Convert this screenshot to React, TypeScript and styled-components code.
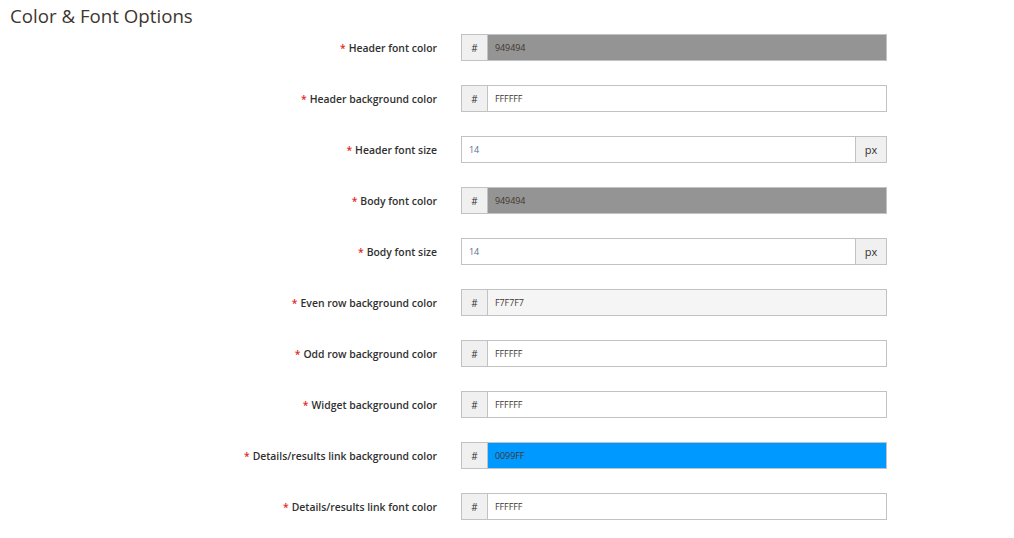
import React from "react";
import styled, { createGlobalStyle } from "styled-components";

const Global = createGlobalStyle`
  html, body { margin: 0; padding: 0; background: #fff; }
  body { font-family: "Open Sans", "Liberation Sans", sans-serif; }
`;

const Page = styled.div`
  padding: 0 10px;
`;

const Title = styled.h2`
  margin: 0;
  padding-top: 3px;
  height: 31px;
  font-size: 18.7px;
  font-weight: 400;
  line-height: 26px;
  color: #41362f;
`;

const Form = styled.div`
  display: flex;
  flex-direction: column;
  gap: 24px;
`;

const Row = styled.div`
  display: grid;
  grid-template-columns: 427px 426px;
  column-gap: 24px;
  align-items: center;
  height: 27px;
`;

const Label = styled.label`
  text-align: right;
  font-size: 10.4px;
  font-weight: 600;
  color: #303030;
`;

const Star = styled.span`
  color: #e22626;
  margin-right: 3px;
`;

const Group = styled.div`
  display: flex;
  height: 27px;
  box-sizing: border-box;
  border: 1px solid #c2c2c2;
`;

const Addon = styled.span<{ $side?: "left" | "right" }>`
  display: flex;
  align-items: center;
  justify-content: center;
  width: ${(p) => (p.$side === "right" ? "30px" : "25px")};
  background: #f0f0f0;
  ${(p) =>
    p.$side === "right"
      ? "border-left: 1px solid #c2c2c2;"
      : "border-right: 1px solid #c2c2c2;"}
  font-size: ${(p) => (p.$side === "right" ? "11px" : "10px")};
  color: #303030;
  flex-shrink: 0;
`;

const Field = styled.span<{ $bg: string; $color: string }>`
  flex: 1;
  display: flex;
  align-items: center;
  padding-left: 7px;
  background: ${(p) => p.$bg};
  color: ${(p) => p.$color};
  font-size: 9px;
  letter-spacing: -0.1px;
`;

type Item = {
  label: string;
  value: string;
  kind: "color" | "size";
  bg?: string;
};

const items: Item[] = [
  { label: "Header font color", value: "949494", kind: "color", bg: "#949494" },
  { label: "Header background color", value: "FFFFFF", kind: "color", bg: "#ffffff" },
  { label: "Header font size", value: "14", kind: "size" },
  { label: "Body font color", value: "949494", kind: "color", bg: "#949494" },
  { label: "Body font size", value: "14", kind: "size" },
  { label: "Even row background color", value: "F7F7F7", kind: "color", bg: "#f5f5f5" },
  { label: "Odd row background color", value: "FFFFFF", kind: "color", bg: "#ffffff" },
  { label: "Widget background color", value: "FFFFFF", kind: "color", bg: "#ffffff" },
  { label: "Details/results link background color", value: "0099FF", kind: "color", bg: "#0099ff" },
  { label: "Details/results link font color", value: "FFFFFF", kind: "color", bg: "#ffffff" },
];

export default function App() {
  return (
    <Page>
      <Global />
      <Title>Color &amp; Font Options</Title>
      <Form>
        {items.map((it) => (
          <Row key={it.label}>
            <Label>
              <Star>*</Star>
              {it.label}
            </Label>
            {it.kind === "color" ? (
              <Group>
                <Addon>#</Addon>
                <Field $bg={it.bg!} $color="#41362f">
                  {it.value}
                </Field>
              </Group>
            ) : (
              <Group>
                <Field $bg="#ffffff" $color="#5b6e8a">
                  {it.value}
                </Field>
                <Addon $side="right">px</Addon>
              </Group>
            )}
          </Row>
        ))}
      </Form>
    </Page>
  );
}
